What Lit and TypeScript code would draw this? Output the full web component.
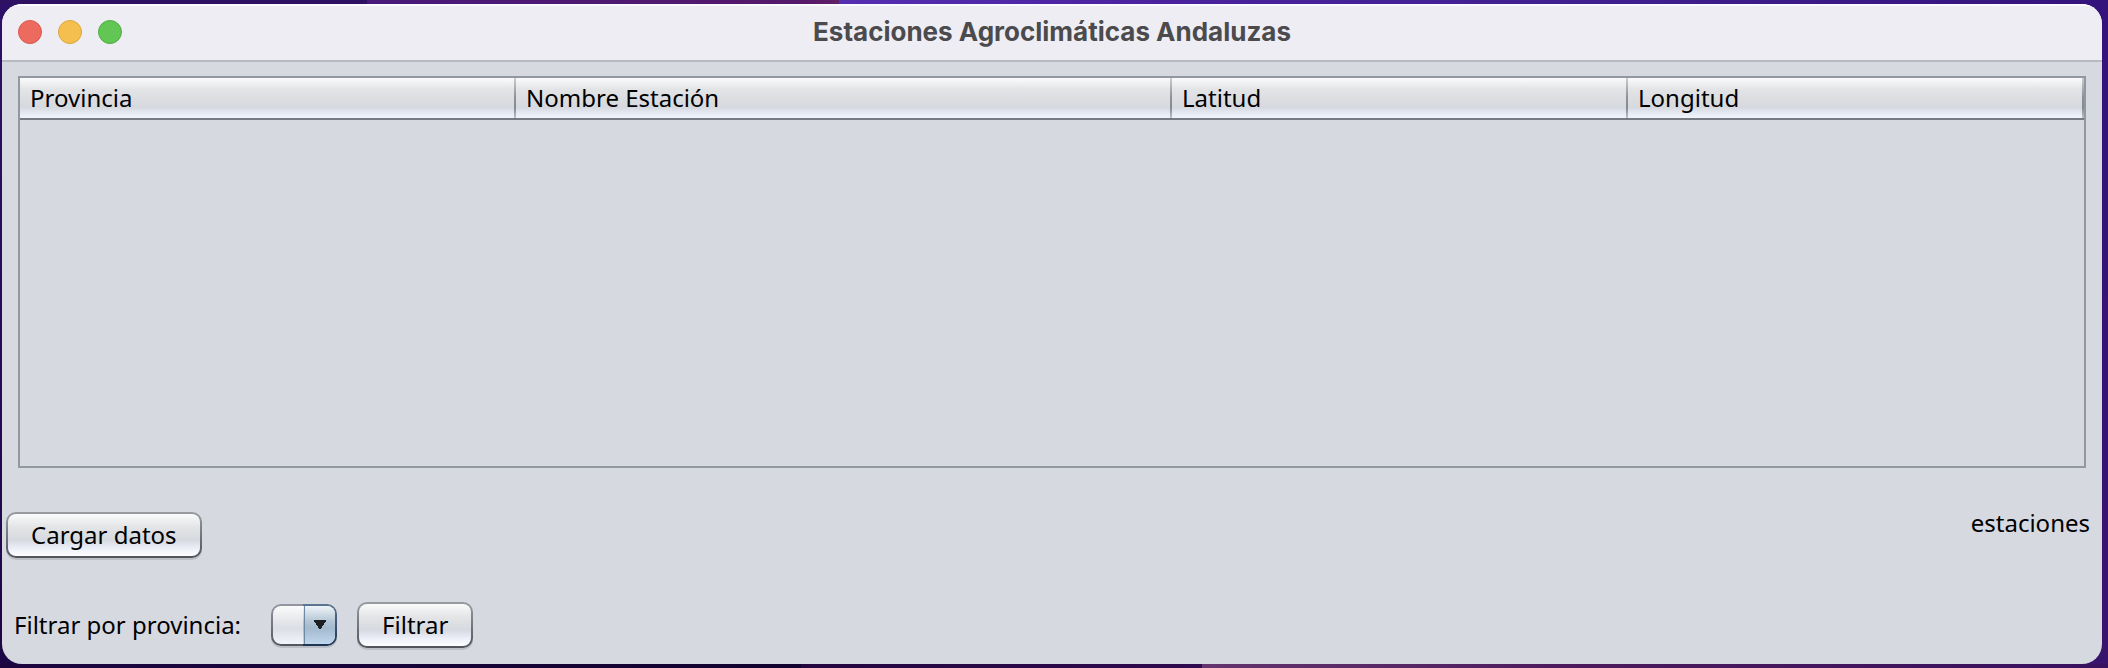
import { LitElement, html, css } from "lit";
import { customElement, property, state } from "lit/decorators.js";

interface Column {
  title: string;
  className: string;
}

const COLUMNS: Column[] = [
  { title: "Provincia", className: "col-provincia" },
  { title: "Nombre Estación", className: "col-nombre" },
  { title: "Latitud", className: "col-coordenada" },
  { title: "Longitud", className: "col-coordenada" },
];

@customElement("title-bar")
class TitleBar extends LitElement {
  @property() heading = "";

  static styles = css`
    :host {
      display: block;
    }
    .bar {
      display: grid;
      grid-template-columns: 1fr auto 1fr;
      align-items: center;
      box-sizing: border-box;
      height: 58px;
      padding: 0 16px 2px;
      background: #eeedf3;
      border-top: 2px solid #fbfafd;
      border-bottom: 2px solid #b9bac1;
    }
    .lights {
      display: flex;
      gap: 16px;
    }
    .light {
      box-sizing: border-box;
      width: 24px;
      height: 24px;
      padding: 0;
      border-radius: 50%;
      border: 1px solid;
    }
    .close {
      background: #ed6a5f;
      border-color: #d8574d;
    }
    .minimize {
      background: #f5bf4f;
      border-color: #dba53c;
    }
    .zoom {
      background: #62c655;
      border-color: #4eae40;
    }
    .title {
      margin: 0;
      font: 700 26px/32px Inter, sans-serif;
      color: #4b4a4d;
    }
  `;

  render() {
    return html`
      <header class="bar">
        <div class="lights">
          <button class="light close" aria-label="Cerrar"></button>
          <button class="light minimize" aria-label="Minimizar"></button>
          <button class="light zoom" aria-label="Ampliar"></button>
        </div>
        <h1 class="title">${this.heading}</h1>
      </header>
    `;
  }
}

@customElement("station-table")
class StationTable extends LitElement {
  static styles = css`
    :host {
      display: block;
      border: 2px solid #9297a1;
    }
    .table {
      width: 100%;
      table-layout: fixed;
      border-collapse: separate;
      border-spacing: 0;
    }
    .col-provincia {
      width: calc(100% * 62 / 258);
    }
    .col-nombre {
      width: calc(100% * 82 / 258);
    }
    .col-coordenada {
      width: calc(100% * 57 / 258);
    }
    .head {
      box-sizing: border-box;
      height: 42px;
      padding: 0 10px;
      text-align: left;
      font-weight: 400;
      line-height: 32px;
      border-bottom: 2px solid #767b83;
      background:
        linear-gradient(#c9ccd1, #8b9096 50%, #858a91 75%, #bcc0c8) right / 2px 100% no-repeat,
        linear-gradient(#fbfbfc, #e3e4e6 28%, #dcdee1 50%, #d6d9df 74%, #e6eaf3 88%, #f0f4fc);
    }
  `;

  render() {
    return html`
      <table class="table">
        <colgroup>
          ${COLUMNS.map((c) => html`<col class=${c.className} />`)}
        </colgroup>
        <thead>
          <tr>
            ${COLUMNS.map((c) => html`<th class="head" scope="col">${c.title}</th>`)}
          </tr>
        </thead>
        <tbody></tbody>
      </table>
    `;
  }
}

@customElement("app-root")
class AppRoot extends LitElement {
  @state() private provinces: string[] = [];

  static styles = css`
    :host {
      display: flex;
      box-sizing: border-box;
      min-height: 100vh;
      padding: 4px 6px 4px 2px;
      font: 24px/32px "Noto Sans", "Open Sans", sans-serif;
      color: #000;
      background:
        linear-gradient(90deg, #2e1163 17.4%, #48197a 17.4%, #55186a 38%, #612066 39.8%, #552eb2 39.8%, #4a229e 55%, #40208f 75%, #35137c) top / 100% 4px no-repeat,
        linear-gradient(90deg, #1d0640, #12022f 38%, #24063f 38%, #2f0a4e 57%, #64346e 57%, #4c1a5c 75%, #38115f) bottom / 100% 4px no-repeat,
        linear-gradient(#2d1068, #1c0645) left / 50% 100% no-repeat,
        linear-gradient(#35137c, #38146c) right / 50% 100% no-repeat;
    }
    .window {
      flex: 1;
      display: flex;
      flex-direction: column;
      overflow: hidden;
      border-radius: 20px;
      background: #d6d9e0;
    }
    .stations {
      flex: 1;
      margin: 14px 16px 16px;
    }
    .actions {
      display: flex;
      justify-content: space-between;
      align-items: flex-start;
      padding: 28px 12px 0 4px;
    }
    .filter {
      display: flex;
      align-items: center;
      padding: 44px 12px 16px;
    }
    .button {
      box-sizing: border-box;
      height: 46px;
      padding: 0 23px;
      border: 2px solid transparent;
      border-radius: 10px;
      font: inherit;
      color: inherit;
      background:
        linear-gradient(#fafbfb, #e4e5e7 30%, #d6d9df 62%, #eceff9 82%, #ffffff) padding-box,
        linear-gradient(#989ca1, #505359) border-box;
      box-shadow: 0 2px 0 #bcbfc5;
    }
    .combo {
      appearance: none;
      box-sizing: border-box;
      width: 66px;
      height: 42px;
      margin: 0 20px 0 30px;
      padding: 0 34px 0 8px;
      border: 2px solid transparent;
      border-radius: 10px;
      font: inherit;
      color: inherit;
      background:
        conic-gradient(from 327deg at 50% 100%, #1c1e20 66deg, transparent 0) right 8px top 14px / 14px 10px no-repeat,
        linear-gradient(#6d8aa5, #6d8aa5) right 30px top 0 / 1px 100% no-repeat,
        linear-gradient(#eff4f8, #b4c6d6 40%, #a3b9ce 58%, #bfd6ec) right / 32px 100% no-repeat padding-box,
        linear-gradient(#fbfbfc, #e3e4e8 45%, #dcdee5 60%, #f3f5fc) padding-box,
        linear-gradient(#5c7590, #1d3550) right / 34px 100% no-repeat border-box,
        linear-gradient(#9497a1, #54565e) border-box;
      box-shadow: 0 2px 0 #bcbfc7;
    }
    .count {
      margin: 0;
      line-height: 22px;
    }
  `;

  render() {
    return html`
      <main class="window">
        <title-bar heading="Estaciones Agroclimáticas Andaluzas"></title-bar>
        <station-table class="stations"></station-table>
        <section class="actions">
          <button class="button">Cargar datos</button>
          <p class="count">estaciones</p>
        </section>
        <form class="filter" @submit=${(e: Event) => e.preventDefault()}>
          <label for="province">Filtrar por provincia:</label>
          <select id="province" class="combo">
            ${this.provinces.map((p) => html`<option>${p}</option>`)}
          </select>
          <button class="button">Filtrar</button>
        </form>
      </main>
    `;
  }
}
